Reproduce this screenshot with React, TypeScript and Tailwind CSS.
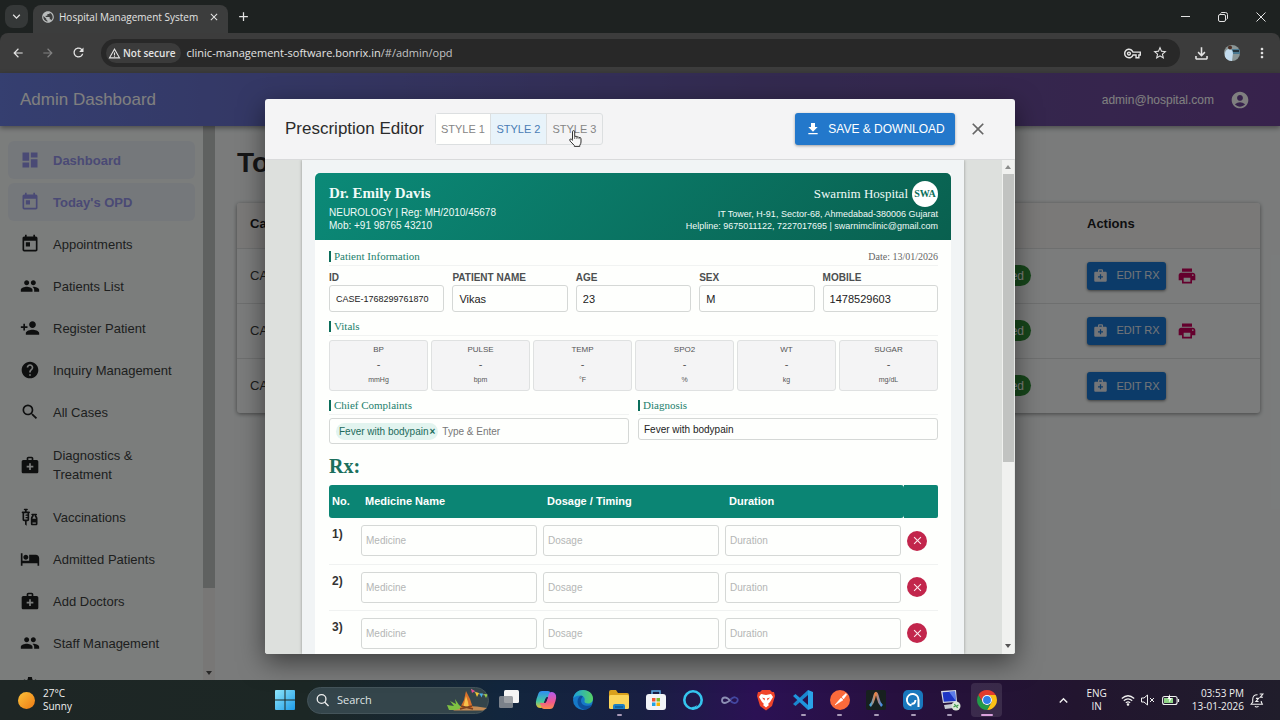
import React from "react";
import {
  MdAccountCircle,
  MdAdd,
  MdArrowBack,
  MdArrowForward,
  MdClose,
  MdDashboard,
  MdDownload,
  MdHelp,
  MdHotel,
  MdKeyboardArrowDown,
  MdKeyboardArrowUp,
  MdMedicalServices,
  MdMoreVert,
  MdOutlineFileDownload,
  MdOutlineVpnKey,
  MdPeople,
  MdPersonAdd,
  MdPrint,
  MdPublic,
  MdRefresh,
  MdSearch,
  MdSettings,
  MdStarBorder,
  MdToday,
  MdVaccines,
  MdWarningAmber,
} from "react-icons/md";

type IconType = React.ComponentType<{ size?: number; className?: string }>;

const sans = "font-['Liberation_Sans',Arial,sans-serif]";
const serif = "font-['Liberation_Serif','Times_New_Roman',serif]";
const system = "font-['Open_Sans','Segoe_UI',sans-serif]";

/* ---------- Browser window ---------- */

function BrowserChrome() {
  return (
    <div className={`${system} shrink-0 bg-[#1e2221] text-[#e3e3e3]`}>
      <div className="flex h-[33px] items-start pt-[5px]">
        <button aria-label="Search tabs" className="ml-[5px] flex size-[23px] items-center justify-center rounded-lg bg-[#353838]">
          <MdKeyboardArrowDown size={15} />
        </button>
        <div className="ml-[5px] flex h-7 w-[195px] items-center rounded-t-lg bg-[#3c3d3d] px-2 pb-1">
          <MdPublic size={14} className="text-[#b9bcbc]" />
          <span className="ml-[4px] text-[10px] whitespace-nowrap">Hospital Management System</span>
          <button aria-label="Close tab" className="ml-auto">
            <MdClose size={12} />
          </button>
        </div>
        <button aria-label="New tab" className="ml-1 flex size-[23px] items-center justify-center">
          <MdAdd size={15} />
        </button>
        <div className="ml-auto flex h-[23px] items-center">
          <button aria-label="Minimize" className="flex w-[38px] justify-center">
            <svg width="9" height="9" viewBox="0 0 9 9" stroke="currentColor"><path d="M0 4.500h9" /></svg>
          </button>
          <button aria-label="Restore" className="flex w-[38px] justify-center">
            <svg width="10" height="10" viewBox="0 0 10 10" fill="none" stroke="currentColor">
              <rect x="0.5" y="2.5" width="7" height="7" rx="1.5" />
              <path d="M2.500 1.500Q3 .5 4 .5h3.500Q9.500.5 9.500 2.500V6q0 1-1 1.500" />
            </svg>
          </button>
          <button aria-label="Close window" className="flex w-[38px] justify-center">
            <svg width="10" height="10" viewBox="0 0 10 10" stroke="currentColor"><path d="M.5.5l9 9M9.500.5l-9 9" /></svg>
          </button>
        </div>
      </div>
      <div className="flex h-10 items-center rounded-t-lg bg-[#3c3c3c]">
        <div className="flex w-[101px] shrink-0 items-center pb-px pl-[11px]">
          <button aria-label="Back" className="w-[30px]"><MdArrowBack size={14} /></button>
          <button aria-label="Forward" className="w-[30px] text-[#828282]"><MdArrowForward size={14} /></button>
          <button aria-label="Reload" className="w-[30px]"><MdRefresh size={15} /></button>
        </div>
        <div className="flex h-7 flex-1 items-center rounded-full bg-[#282828] pr-3 pl-[5px]">
          <span className="flex h-5 items-center gap-[2px] rounded-full bg-[#3b3b3b] pr-[5px] pl-[2px] text-[10px] font-semibold whitespace-nowrap">
            <MdWarningAmber size={13} /> Not secure
          </span>
          <span className="ml-[6px] text-[11px] whitespace-nowrap">
            clinic-management-software.bonrix.in<span className="text-[#c4c4c4]">/#/admin/opd</span>
          </span>
          <MdOutlineVpnKey size={17} className="ml-auto" />
          <MdStarBorder size={16} className="ml-[11px]" />
        </div>
        <div className="flex shrink-0 items-center pr-[10px] pl-3">
          <MdOutlineFileDownload size={19} />
          <svg width="16" height="16" viewBox="0 0 16 16" className="ml-[13px]">
            <clipPath id="avatar"><circle cx="8" cy="8" r="8" /></clipPath>
            <g clipPath="url(#avatar)">
              <rect width="16" height="16" fill="#8b9696" />
              <rect x="8" y="4" width="8" height="5" fill="#4a7890" />
              <rect x="9" y="5" width="6" height="2" fill="#25343c" />
              <path d="M1 16V8q1-4 4-4t4 4l-1 8z" fill="#c3dcee" />
              <circle cx="6" cy="2.500" r="2" fill="#4c2f25" />
            </g>
          </svg>
          <MdMoreVert size={16} className="ml-[14px]" />
        </div>
      </div>
    </div>
  );
}

/* ---------- Application ---------- */

const menu: { label: string; icon: IconType; active?: boolean; tall?: boolean }[] = [
  { label: "Dashboard", icon: MdDashboard, active: true },
  { label: "Today's OPD", icon: MdToday, active: true },
  { label: "Appointments", icon: MdToday },
  { label: "Patients List", icon: MdPeople },
  { label: "Register Patient", icon: MdPersonAdd },
  { label: "Inquiry Management", icon: MdHelp },
  { label: "All Cases", icon: MdSearch },
  { label: "Diagnostics & Treatment", icon: MdMedicalServices, tall: true },
  { label: "Vaccinations", icon: MdVaccines },
  { label: "Admitted Patients", icon: MdHotel },
  { label: "Add Doctors", icon: MdMedicalServices },
  { label: "Staff Management", icon: MdPeople },
  { label: "Settings", icon: MdSettings },
];

function Sidebar() {
  return (
    <aside className="flex w-[215px] shrink-0 bg-[#f7faf9]">
      <nav className="flex min-w-0 flex-1 flex-col gap-1 overflow-hidden px-2 pt-[15px]">
        {menu.map(({ label, icon: Icon, active, tall }) => (
          <a
            key={label}
            href="#"
            className={`flex shrink-0 items-center gap-[13px] rounded-md px-[12px] text-[13px] leading-[19px] ${tall ? "h-[59px]" : "h-[38px]"} ${
              active ? "bg-[#ebf0f6] font-bold text-[#9494ea]" : "text-[#3c3f3e]"
            }`}
          >
            <Icon size={20} className={`shrink-0 ${active ? "" : "text-[#1c1e1e]"}`} />
            <span className={tall ? "w-[100px]" : "whitespace-nowrap"}>{label}</span>
          </a>
        ))}
      </nav>
      <div className="flex w-3 shrink-0 flex-col justify-between bg-[#f1efec]">
        <div className="h-[462px] bg-[#bfc2c1]" />
        <svg viewBox="0 0 12 12" className="mb-px size-3" fill="#505050"><path d="M3 4h6L6 8z" /></svg>
      </div>
    </aside>
  );
}

const cases = [
  { id: "CASE-1768299761870", print: true },
  { id: "CASE-1768299761869", print: true },
  { id: "CASE-1768299761868", print: false },
];

function CaseTable() {
  return (
    <main className="min-w-0 flex-1 overflow-hidden bg-[#f4f7f7] pr-5 pl-[22px]">
      <h1 className="mt-[21px] text-[28px] leading-8 font-bold text-[#2a2a2c]">Today's OPD</h1>
      <div className="mt-6 overflow-hidden rounded-[3px] bg-[#f7f9f8] shadow-[0_1px_4px_rgba(0,0,0,0.45)]">
        <table className="w-full table-fixed border-collapse text-left text-[13px] text-[#3a3a3a]">
          <thead>
            <tr className="h-[45px] border-b border-[#dcdfde] bg-[#f4f2f1] text-[#1d1d1f]">
              <th className="pb-[3px] pl-[13px]">Case ID</th>
              <th className="w-[120px] pb-[3px]">Status</th>
              <th className="w-[173px] pb-[3px]">Actions</th>
            </tr>
          </thead>
          <tbody>
            {cases.map((row) => (
              <tr key={row.id} className="h-[55px] border-b border-[#dcdfde] last:border-0">
                <td className="pl-[13px]">{row.id}</td>
                <td>
                  <span className="ml-[-8px] inline-flex h-[21px] items-center rounded-full bg-[#2f8c36] px-[7px] text-[12px] text-white">
                    Completed
                  </span>
                </td>
                <td>
                  <div className="flex items-center gap-[11px]">
                    <button className="flex h-[28px] w-[79px] items-center justify-center gap-2 rounded-[3px] bg-[#1976d2] text-[11px] text-[#e6eaf0] shadow-[0_1px_3px_rgba(0,0,0,0.5)]">
                      <MdMedicalServices size={15} /> EDIT RX
                    </button>
                    {row.print && (
                      <button aria-label="Print">
                        <MdPrint size={20} className="text-[#c8005a]" />
                      </button>
                    )}
                  </div>
                </td>
              </tr>
            ))}
          </tbody>
        </table>
      </div>
    </main>
  );
}

/* ---------- Prescription editor ---------- */

function SectionTitle({ children, extra }: { children: React.ReactNode; extra?: React.ReactNode }) {
  return (
    <div className={`${serif} flex h-[19px] items-center border-b border-[#f1f3f2]`}>
      <span className="mr-[3px] h-[11px] w-[2px] bg-[#0b6e5b]" />
      <h4 className="text-[11px] leading-[14px] text-[#22806c]">{children}</h4>
      {extra}
    </div>
  );
}

const patient = [
  { id: "case-id", label: "ID", value: "CASE-1768299761870", size: "text-[9px]" },
  { id: "name", label: "PATIENT NAME", value: "Vikas", size: "text-[11px]" },
  { id: "age", label: "AGE", value: "23", size: "text-[11px]" },
  { id: "sex", label: "SEX", value: "M", size: "text-[11px]" },
  { id: "mobile", label: "MOBILE", value: "1478529603", size: "text-[11px]" },
];

const vitals = [
  ["BP", "mmHg"],
  ["PULSE", "bpm"],
  ["TEMP", "°F"],
  ["SPO2", "%"],
  ["WT", "kg"],
  ["SUGAR", "mg/dL"],
];

function Prescription() {
  return (
    <div className="flex-1 bg-[#fefffd]">
      <header className="flex h-[67px] justify-between rounded-t-[5px] bg-[linear-gradient(135deg,#0b8a78,#09604f)] pr-[13px] pl-[14px] text-[10px] text-[#effaf7]">
        <div className="pt-3 leading-[13px]">
          <h3 className={`${serif} mb-[4px] text-[15px] leading-[17px] font-bold`}>Dr. Emily Davis</h3>
          <p>NEUROLOGY | Reg: MH/2010/45678</p>
          <p>Mob: +91 98765 43210</p>
        </div>
        <div className="pt-2 text-right text-[9px] leading-[12px]">
          <div className={`${serif} mb-px flex items-center justify-end gap-1 text-[13px]`}>
            Swarnim Hospital
            <span className="flex size-[26px] items-center justify-center rounded-full bg-white text-[10px] font-bold text-[#0b6e5b]">SWA</span>
          </div>
          <p>IT Tower, H-91, Sector-68, Ahmedabad-380006 Gujarat</p>
          <p>Helpline: 9675011122, 7227017695 | swarnimclinic@gmail.com</p>
        </div>
      </header>
      <div className="pt-[7px] pr-[13px] pl-[14px]">
        <SectionTitle extra={<span className="ml-auto text-[10px] text-[#666]">Date: 13/01/2026</span>}>Patient Information</SectionTitle>
        <div className="grid grid-cols-5 gap-2 pt-1">
          {patient.map((f) => (
            <div key={f.id}>
              <label htmlFor={f.id} className="block h-[15px] text-[10px] leading-[15px] font-bold text-[#4c4f50]">{f.label}</label>
              <input id={f.id} defaultValue={f.value} className={`${f.size} block h-[27px] w-full rounded-[3px] border border-[#d5d8d6] bg-transparent px-[6px] text-[#222]`} />
            </div>
          ))}
        </div>
        <div className="mt-[5px]"><SectionTitle>Vitals</SectionTitle></div>
        <div className="mt-1 grid grid-cols-6 gap-[3px]">
          {vitals.map(([name, unit]) => (
            <div key={name} className="flex h-[51px] flex-col items-center rounded-[3px] border border-[#dfe1e1] bg-[#f4f4f5] pt-[2px] text-[#555]">
              <span className="text-[8px] leading-[14px]">{name}</span>
              <span className="text-[11px] leading-[15px]">-</span>
              <span className="text-[7px] leading-[16px]">{unit}</span>
            </div>
          ))}
        </div>
        <div className="mt-[5px] grid grid-cols-2 items-start gap-[9px]">
          <div>
            <SectionTitle>Chief Complaints</SectionTitle>
            <div className="mt-[3px] flex h-[26px] items-center rounded-[3px] border border-[#d5d8d6] px-[6px]">
              <span className="flex h-[17px] shrink-0 items-center gap-px rounded-full bg-[#e2f4ef] px-[3px] text-[10px] text-[#1c6b5b]">
                Fever with bodypain
                <button aria-label="Remove Fever with bodypain" className="font-bold">×</button>
              </span>
              <input aria-label="Chief Complaints" placeholder="Type & Enter" className="ml-1 min-w-0 flex-1 bg-transparent text-[10px] placeholder:text-[#777]" />
            </div>
          </div>
          <div>
            <SectionTitle>Diagnosis</SectionTitle>
            <input aria-label="Diagnosis" defaultValue="Fever with bodypain" className="mt-[3px] block h-[22px] w-full rounded-[3px] border border-[#d5d8d6] bg-transparent px-[5px] text-[10px] text-[#222]" />
          </div>
        </div>
        <h3 className={`${serif} mt-[11px] text-[20px] leading-[22px] font-bold text-[#1b705d]`}>Rx:</h3>
        <table className="mt-[8px] w-full table-fixed border-collapse text-left">
          <thead>
            <tr className="h-[33px] text-[11px] text-white">
              <th className="w-[29px] rounded-l-[3px] bg-[#0b8574] pl-[3px]">No.</th>
              <th className="bg-[#0b8574] pl-[7px]">Medicine Name</th>
              <th className="bg-[#0b8574] pl-[7px]">Dosage / Timing</th>
              <th className="rounded-r-[3px] bg-[#0b8574] pl-[7px]">Duration</th>
              <th aria-label="Remove" className="w-[34px] rounded-r-[2px] bg-[#0b8574]" />
            </tr>
          </thead>
          <tbody>
            {[1, 2, 3].map((n) => (
              <tr key={n} className="h-[46px] border-b border-[#f0f2f1]">
                <td className="pt-2 pl-[3px] align-top text-[12px] leading-4 font-bold text-[#333]">{n})</td>
                {["Medicine", "Dosage", "Duration"].map((field) => (
                  <td key={field} className="px-[3px]">
                    <input aria-label={`${field} ${n}`} placeholder={field} className="block h-[31px] w-full rounded-[3px] border border-[#d5d8d6] bg-transparent px-[4px] text-[10px] placeholder:text-[#b4b6b5]" />
                  </td>
                ))}
                <td className="pl-[3px]">
                  <button aria-label={`Remove medicine ${n}`} className="flex size-5 items-center justify-center rounded-full bg-[#c2264c] text-[#fbe9ee]">
                    <MdClose size={13} />
                  </button>
                </td>
              </tr>
            ))}
          </tbody>
        </table>
      </div>
    </div>
  );
}

function HandCursor() {
  return (
    <svg className="absolute top-[16px] left-[22px]" width="13" height="17" viewBox="0 0 13 17" fill="#f8f8f8" stroke="#333" strokeLinejoin="round">
      <path d="M3.500 9.500V1.800q0-1.200 1.100-1.200t1.100 1.200V6.500q1.900-.9 2.200.5 1.700-.7 2.100.6 2-.5 2 1.200v3.200q0 1.800-1.200 3.200v1.200H5.300v-1L1.200 11.200Q.2 9.600 1.200 9q1-.4 2.300 1.300z" />
      <path d="M5.700 6.500v2.500M7.900 7v2M10 7.600v1.500" strokeWidth=".7" />
    </svg>
  );
}

function EditorDialog() {
  return (
    <div className="absolute inset-0 flex justify-center bg-black/50 py-[26px]">
      <section role="dialog" aria-label="Prescription Editor" className="flex w-full max-w-[750px] flex-col overflow-hidden rounded-[3px] bg-[#f4f4f5] shadow-[0_8px_26px_rgba(0,0,0,0.5)]">
        <header className="flex h-[61px] shrink-0 items-center border-b border-[#d9dadb] px-5">
          <h2 className="text-[17px] text-[#2b2b2b]">Prescription Editor</h2>
          <div className="ml-[11px] flex h-8 divide-x divide-[#dcdfe0] rounded-[3px] border border-[#dcdfe0] text-[11px] text-[#858585]">
            <button className="w-[55px] bg-[#fffffd]">STYLE 1</button>
            <button className="w-14 bg-[#e8f3fa] text-[#4a7cb5]">STYLE 2</button>
            <button className="relative w-[55px]">
              STYLE 3
              <HandCursor />
            </button>
          </div>
          <button className="ml-auto flex h-8 w-40 items-center justify-center gap-[7px] rounded-[3px] bg-[#2378cb] text-[12px] whitespace-nowrap text-white shadow-[0_1px_3px_rgba(0,0,0,0.35)]">
            <MdDownload size={16} /> SAVE &amp; DOWNLOAD
          </button>
          <button aria-label="Close" className="mr-[7px] ml-[13px] text-[#666]">
            <MdClose size={20} />
          </button>
        </header>
        <div className="flex min-h-0 flex-1 overflow-hidden bg-[#dde0dd]">
          <div className="flex min-w-0 flex-1 pr-[38px] pl-[37px]">
            <div className="flex flex-1 bg-[#f1f4f5] px-[13px] pt-[13px] shadow-[0_0_3px_rgba(0,0,0,0.35)]">
              <Prescription />
            </div>
          </div>
          <div className="flex w-[13px] shrink-0 flex-col items-center border-r border-[#e4e6e4] bg-[#f0f1ef]">
            <svg viewBox="0 0 12 14" className="h-[14px] w-3" fill="#8b8d8b"><path d="M3 9h6L6 5z" /></svg>
            <div className="h-[288px] w-[11px] bg-[#c1c3c1]" />
            <svg viewBox="0 0 12 14" className="mt-auto h-[14px] w-3" fill="#555"><path d="M3 4h6L6 8z" /></svg>
          </div>
        </div>
      </section>
    </div>
  );
}

/* ---------- Taskbar ---------- */

const glyphs: { name: string; running?: boolean; active?: boolean; art: React.ReactNode }[] = [
  {
    name: "Task View",
    art: (
      <>
        <rect x="7" y="2" width="15" height="13" rx="1.500" fill="#f5f5f5" />
        <rect x="2" y="8" width="14" height="12" rx="1.500" fill="#8d9298" fillOpacity=".85" />
      </>
    ),
  },
  {
    name: "Copilot",
    art: (
      <>
        <path d="M8 3h6q2 0 2.600 2L18 9h-4q-2 0-2.700 2.200L9 18.500Q8.400 20 6.500 20 3 20 2 16.500q-.5-2 .5-5.500L4.600 5Q5.400 3 8 3z" fill="url(#cpA)" />
        <path d="M16 21h-6q-2 0-2.600-2L6 15h4q2 0 2.700-2.200L15 5.500Q15.600 4 17.500 4 21 4 22 7.500q.5 2-.5 5.500L19.400 19Q18.600 21 16 21z" fill="url(#cpB)" />
        <path d="M10 15q2 0 2.700-2.200L14 9q-2 0-2.700 2.200z" fill="#251c4c" />
      </>
    ),
  },
  {
    name: "Edge",
    art: (
      <>
        <circle cx="12" cy="12" r="10" fill="#1679c8" />
        <path d="M2 11C3 5 7 2 12 2c6 0 10 4 10 8.500 0 3-2 5-5 5-2.500 0-4-1-3.500-2.500 1-3-1-5.500-4.500-5.500-3.500 0-6 1.500-7 3.500z" fill="url(#edgeA)" />
        <path d="M9 8c-4 3-3.500 12 4.500 13.800C19 21 21 17.500 21 17c-6 2-11 0-11-4.500 0-2 1-3 2-4Q11 7.500 9 8z" fill="#0d4f9c" />
      </>
    ),
  },
  {
    name: "File Explorer",
    running: true,
    art: (
      <>
        <path d="M2 4q0-2 2-2h5l2 3h9q2 0 2 2v4H2z" fill="#d9a01c" />
        <rect x="2" y="7" width="20" height="14" rx="1.500" fill="#fbd55a" />
        <path d="M6 21v-3q0-2 2-2h8q2 0 2 2v3z" fill="#1c7fc4" />
        <path d="M8 19h8" stroke="#0d5a94" strokeWidth="1.500" />
      </>
    ),
  },
  {
    name: "Microsoft Store",
    art: (
      <>
        <path d="M8 7V3h8v4" fill="none" stroke="#5aa8e0" strokeWidth="1.500" />
        <rect x="2" y="6" width="20" height="16" rx="3" fill="#f2f4f7" />
        <path d="M8 10h3.500v3.500H8z" fill="#ef5330" />
        <path d="M12.500 10H16v3.500h-3.500z" fill="#7db928" />
        <path d="M8 14.500h3.500V18H8z" fill="#22a2e4" />
        <path d="M12.500 14.500H16V18h-3.500z" fill="#f8b400" />
      </>
    ),
  },
  {
    name: "Alexa",
    art: (
      <>
        <circle cx="12" cy="12" r="8.700" fill="none" stroke="#35c4ee" strokeWidth="2.600" />
        <path d="M11 19q3 0 5-2l-1.500 3.500-3 1.500z" fill="#35c4ee" />
      </>
    ),
  },
  {
    name: "Visual Studio",
    art: (
      <>
        <path d="M12.500 13q-3-3.500-5.500-3.500Q4 9.500 4 12.500q0 2.500 3 2.500 2.500 0 5.500-3.500" fill="none" stroke="#8d8fb4" strokeWidth="1.800" />
        <path d="M12.500 11.500q3-3 5-2 3 1 2 3.700-1 2.300-3.500 1.800-1.500-.4-3.500-2" fill="none" stroke="#4347a0" strokeWidth="1.800" />
      </>
    ),
  },
  {
    name: "Brave",
    art: (
      <>
        <path d="M8 2h8l2 2h2l1 4-3 10-6 4.500L6 18 3 8l1-4h2z" fill="#f0442a" />
        <path d="M7 6l5 1 5-1 2 3-3 5-2 2 1 1-3 2.500L9 17l1-1-2-2-3-5z" fill="#fff" />
        <path d="M8 9.500l3 1-.5 2zM16 9.500l-3 1 .5 2z" fill="#f0442a" />
      </>
    ),
  },
  {
    name: "Visual Studio Code",
    running: true,
    art: (
      <>
        <path d="M17 2l5 2v16l-5 2z" fill="#2aa3e8" />
        <path d="M17 2v5L4.500 18 2 16z" fill="#1a87cf" />
        <path d="M17 22v-5L4.500 6 2 8z" fill="#1f95dc" />
      </>
    ),
  },
  {
    name: "Postman",
    running: true,
    art: (
      <>
        <circle cx="12" cy="12" r="10" fill="#fb6a3b" />
        <path d="M7 17l6-7 2 2zM14 9l4-3.500.8 1L15.500 11z" fill="#fff" stroke="#fff" strokeWidth=".6" />
      </>
    ),
  },
  {
    name: "Antigravity",
    running: true,
    art: (
      <>
        <rect x="2" y="2" width="20" height="20" rx="2" fill="#17201f" />
        <path d="M6 18Q9 15 10 10t2-5q1 0 2 5t4 8" fill="none" stroke="url(#agA)" strokeWidth="2.600" />
      </>
    ),
  },
  {
    name: "Assistant",
    running: true,
    art: (
      <>
        <rect x="2" y="2" width="20" height="20" rx="5" fill="#1978bd" />
        <path d="M10.500 17.500A5.800 5.800 0 1 1 17.500 12v7M10.500 15.500q3.500 1 4-3.500" fill="none" stroke="#fff" strokeWidth="2" />
      </>
    ),
  },
  {
    name: "Remote Desktop",
    running: true,
    art: (
      <>
        <path d="M3 3l15-1 1 12-14 1z" fill="#d6dbe6" />
        <path d="M4.500 4.200l12.500-.8.800 9.600-12 .8z" fill="#1e35c4" />
        <path d="M11 3.800l6-.4.800 9.600z" fill="#5c7bea" />
        <path d="M6 17l8-1 2 4-9 1z" fill="#c6cad2" />
        <circle cx="18" cy="18" r="4.500" fill="#dce6da" />
        <path d="M15.500 19l2-1-1-2M20.500 17l-2 1 1 2" fill="none" stroke="#3d9b4a" strokeWidth="1.200" />
      </>
    ),
  },
  {
    name: "Chrome",
    running: true,
    active: true,
    art: (
      <g transform="translate(2 2) scale(.8333)">
        <path d="M12 6h10.390A12 12 0 0 0 1.610 6L6.800 15A6 6 0 0 1 12 6z" fill="#e33b2e" />
        <path d="M12 6h10.390A12 12 0 0 1 12 24L17.200 15A6 6 0 0 0 12 6z" fill="#fbc116" />
        <path d="M1.610 6A12 12 0 0 0 12 24L17.200 15A6 6 0 0 1 6.800 15z" fill="#229a48" />
        <circle cx="12" cy="12" r="6" fill="#fff" />
        <circle cx="12" cy="12" r="4.700" fill="#2f7de9" />
      </g>
    ),
  },
];

function Taskbar() {
  return (
    <footer className={`${system} flex h-10 shrink-0 items-center bg-[linear-gradient(90deg,#1e2625_0%,#1c2725_24%,#12263d_39%,#181f42_50%,#2b1154_59%,#27103f_70%,#22152f_84%,#201d2b_100%)] text-[#f0f0f0]`}>
      <div className="flex w-[275px] shrink-0 items-center gap-2 pl-[18px] text-[10px] leading-[13px]">
        <svg width="17" height="17" viewBox="0 0 17 17">
          <defs>
            <linearGradient id="sun" x1="0" y1="0" x2="1" y2="1"><stop stopColor="#fcc23a" /><stop offset="1" stopColor="#ee7a14" /></linearGradient>
            <linearGradient id="cpA" x1="0" y1="0" x2="0" y2="1"><stop stopColor="#2f8df5" /><stop offset=".6" stopColor="#43c7a0" /><stop offset="1" stopColor="#f2c230" /></linearGradient>
            <linearGradient id="cpB" x1="0" y1="0" x2="0" y2="1"><stop stopColor="#b35cf0" /><stop offset=".6" stopColor="#f0588c" /><stop offset="1" stopColor="#fa8e4c" /></linearGradient>
            <linearGradient id="edgeA"><stop stopColor="#1ba0dc" /><stop offset="1" stopColor="#56d364" /></linearGradient>
            <linearGradient id="agA"><stop stopColor="#39a7e8" /><stop offset=".45" stopColor="#f0813c" /><stop offset="1" stopColor="#3a8df0" /></linearGradient>
            <linearGradient id="win" x1="0" y1="0" x2="1" y2="1"><stop stopColor="#8fe6fb" /><stop offset="1" stopColor="#1e9be8" /></linearGradient>
          </defs>
          <circle cx="8.500" cy="8.500" r="8.500" fill="url(#sun)" />
        </svg>
        <div>
          <div>27°C</div>
          <div>Sunny</div>
        </div>
      </div>
      <button aria-label="Start" className="flex w-8 shrink-0 pr-3">
        <svg width="20" height="20" viewBox="0 0 20 20" fill="url(#win)">
          <path d="M0 1q0-1 1-1h8.500v9.500H0zM10.500 0H19q1 0 1 1v8.500h-9.500zM0 10.500h9.500V20H1q-1 0-1-1zM10.500 10.500H20V19q0 1-1 1h-8.500z" />
        </svg>
      </button>
      <div className="flex h-[27px] w-[182px] shrink-0 items-center rounded-full border border-[#44545a] bg-[#34454b] pl-2">
        <svg width="13" height="14" viewBox="0 0 14 14" fill="none" stroke="#f0f0f0" strokeWidth="1.400"><circle cx="6" cy="6" r="4.700" /><path d="M9.500 9.500l4 4" /></svg>
        <input aria-label="Search" placeholder="Search" className="ml-2 w-20 bg-transparent text-[11px] placeholder:text-[#dfe3e4]" />
        <svg width="42" height="24" viewBox="0 0 42 24" className="ml-auto">
          <path d="M4 20q16-4 37 0l-4 2.500H8z" fill="#c58c55" />
          <path d="M1 17l7 1-4-5 6 3-1-5 4 6 4 3-8 2H3z" fill="#7fc142" />
          <path d="M20 3l4 8 3 9H14l4-8z" fill="#d9722a" />
          <path d="M20 8l2 6 1 6h-6z" fill="#f8c04a" />
          <path d="M14 21l12-3M15 18l12 3" stroke="#7a4020" strokeWidth="1.600" />
          <path d="M25 1q6 6 16 6" fill="none" stroke="#aaa" strokeWidth=".6" />
          <path d="M25 1l4 2-3 2z" fill="#e84a8c" /><path d="M29 4l4 1-2 4z" fill="#f3c332" /><path d="M33.500 5.500h3.500l-1.500 4z" fill="#45b0e8" /><path d="M38 6l3.500.5L40 10z" fill="#9bd14a" />
        </svg>
      </div>
      <div className="ml-[2px] grid w-[514px] shrink-0 grid-cols-[repeat(14,minmax(0,1fr))]">
        {glyphs.map((g) => (
          <button key={g.name} aria-label={g.name} className="relative flex h-10 items-center justify-center">
            {g.active && <span className="absolute inset-x-[3px] inset-y-[3px] rounded bg-white/10" />}
            <svg width="24" height="24" viewBox="0 0 24 24" className="relative">{g.art}</svg>
            {g.running && <span className={`absolute bottom-1 h-[2px] rounded-full ${g.active ? "w-3 bg-[#d9a0dc]" : "w-[5px] bg-[#a99bb8]"}`} />}
          </button>
        ))}
      </div>
      <div className="ml-auto flex shrink-0 items-center pr-4 text-[10px] leading-[13px]">
        <MdKeyboardArrowUp size={17} />
        <div className="ml-[14px] text-center">
          <div>ENG</div>
          <div>IN</div>
        </div>
        <svg width="14" height="12" viewBox="0 0 14 12" className="ml-[14px]" fill="none" stroke="#f0f0f0" strokeWidth="1.200">
          <path d="M.8 4.500q6.200-5.500 12.400 0M2.800 6.800q4.200-3.700 8.400 0M4.800 8.900q2.200-1.900 4.400 0" /><circle cx="7" cy="10.500" r=".7" fill="#f0f0f0" />
        </svg>
        <svg width="14" height="12" viewBox="0 0 14 12" className="ml-[6px]" fill="none" stroke="#f0f0f0"><path d="M.5 4h2.500l3.500-3v10L3 8H.5zM9 4l4 4M13 4L9 8" /></svg>
        <svg width="18" height="12" viewBox="0 0 18 12" className="ml-[7px]">
          <rect x=".6" y="2.500" width="14.500" height="8" rx="2" fill="none" stroke="#f0f0f0" strokeWidth="1.100" />
          <path d="M2 4h9v5H2z" fill="#8fd486" /><path d="M16.500 5v3" stroke="#f0f0f0" strokeWidth="1.200" /><path d="M8 0L5.500 5h2L7 8.500 10 4H8z" fill="#fff" />
        </svg>
        <div className="ml-[12px] text-right">
          <div>03:53 PM</div>
          <div>13-01-2026</div>
        </div>
        <svg width="14" height="15" viewBox="0 0 13 14" className="ml-[6px]" fill="none" stroke="#f0f0f0">
          <path d="M7 1.700Q2.500 1.500 2.500 6v2.500L1 10.500h10.500l-1-2V7.500M4.500 12.500q1.500 1 3.500 0M9 1h3L9.500 4H12M5.500 5h2.500L5.500 8h2.500" />
        </svg>
      </div>
    </footer>
  );
}

export default function App() {
  return (
    <div className={`${sans} flex h-screen flex-col overflow-hidden`}>
      <BrowserChrome />
      <div className="relative flex min-h-0 flex-1 flex-col">
        <header className="z-0 flex h-[53px] shrink-0 items-center justify-between bg-[linear-gradient(90deg,#6a7ee0,#66549f_60%,#6f4598)] pr-[30px] pl-5 text-white shadow-[0_2px_5px_rgba(0,0,0,0.4)]">
          <span className="text-[17px]">Admin Dashboard</span>
          <div className="flex items-center gap-4 text-[12px]">
            admin@hospital.com
            <MdAccountCircle size={20} />
          </div>
        </header>
        <div className="flex min-h-0 flex-1">
          <Sidebar />
          <CaseTable />
        </div>
        <EditorDialog />
      </div>
      <Taskbar />
    </div>
  );
}
